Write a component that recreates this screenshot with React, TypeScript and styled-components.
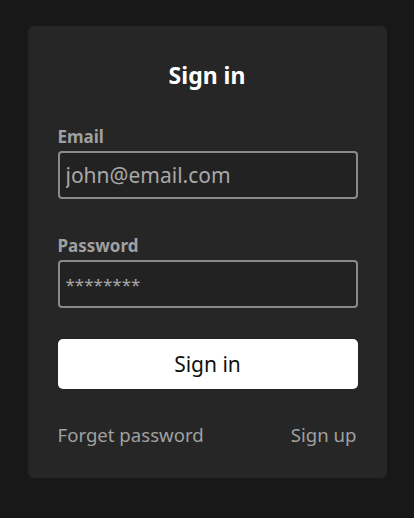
import styled, { createGlobalStyle } from "styled-components";

const GlobalStyle = createGlobalStyle`
  html, body {
    margin: 0;
    padding: 0;
    background: #181818;
    font-family: "Noto Sans", "Open Sans", sans-serif;
  }
`;

const Page = styled.div`
  width: 414px;
  height: 518px;
  padding-top: 26px;
  box-sizing: border-box;
  display: flex;
  justify-content: center;
`;

const Card = styled.form`
  width: 359px;
  height: 452px;
  box-sizing: border-box;
  background: #262626;
  border-radius: 6px;
  padding: 30px 30px 0;
  display: flex;
  flex-direction: column;
`;

const Title = styled.h1`
  margin: 0 0 31px;
  text-align: center;
  color: #ffffff;
  font-size: 23px;
  font-weight: 700;
  line-height: 38px;
`;

const Field = styled.div<{ $gap: number }>`
  display: flex;
  flex-direction: column;
  margin-bottom: ${(p) => p.$gap}px;
`;

const Label = styled.label`
  color: #a0a0a0;
  font-size: 17px;
  font-weight: 700;
  line-height: 24px;
  margin-bottom: 2px;
`;

const Input = styled.input<{ $size?: number }>`
  width: 300px;
  height: 48px;
  box-sizing: border-box;
  background: #222222;
  border: 2px solid #8a8a8a;
  border-radius: 4px;
  padding: 0 6px;
  color: #a8a8a8;
  font-family: inherit;
  font-size: ${(p) => p.$size ?? 21}px;
  outline: none;

  &::placeholder {
    color: #a8a8a8;
  }
`;

const Button = styled.button`
  width: 300px;
  height: 50px;
  border: none;
  border-radius: 5px;
  background: #ffffff;
  color: #111111;
  font-family: inherit;
  font-size: 21px;
  cursor: pointer;
`;

const Links = styled.div`
  display: flex;
  justify-content: space-between;
  margin-top: 33px;
`;

const LinkText = styled.a`
  color: #a0a0a0;
  font-size: 18.6px;
  line-height: 26px;
  text-decoration: none;
`;

export default function App() {
  return (
    <>
      <GlobalStyle />
      <Page>
        <Card>
          <Title>Sign in</Title>
          <Field $gap={35}>
            <Label>Email</Label>
            <Input type="text" placeholder="john@email.com" />
          </Field>
          <Field $gap={31}>
            <Label>Password</Label>
            <Input type="text" $size={17} placeholder="********" />
          </Field>
          <Button type="button">Sign in</Button>
          <Links>
            <LinkText href="#">Forget password</LinkText>
            <LinkText href="#">Sign up</LinkText>
          </Links>
        </Card>
      </Page>
    </>
  );
}
